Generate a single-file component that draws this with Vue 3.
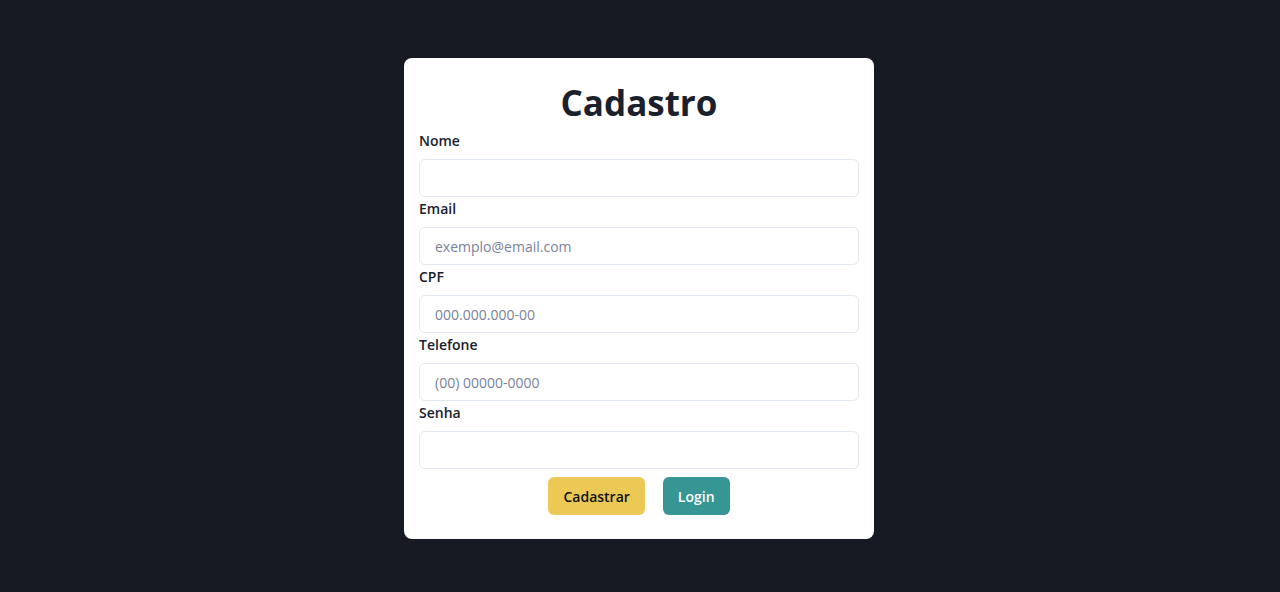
<script setup>
import { reactive } from 'vue'

const fields = [
  { id: 'nome', label: 'Nome', type: 'text', placeholder: '' },
  { id: 'email', label: 'Email', type: 'email', placeholder: 'exemplo@email.com' },
  { id: 'cpf', label: 'CPF', type: 'text', placeholder: '000.000.000-00' },
  { id: 'telefone', label: 'Telefone', type: 'tel', placeholder: '(00) 00000-0000' },
  { id: 'senha', label: 'Senha', type: 'password', placeholder: '' }
]
const form = reactive({ nome: '', email: '', cpf: '', telefone: '', senha: '' })
</script>

<template>
  <main class="page">
    <form class="card" @submit.prevent>
      <h1 class="title">Cadastro</h1>
      <div v-for="f in fields" :key="f.id" class="field">
        <label class="label" :for="f.id">{{ f.label }}</label>
        <input :id="f.id" v-model="form[f.id]" class="input" :type="f.type" :placeholder="f.placeholder" />
      </div>
      <div class="actions">
        <button class="button primary" type="submit">Cadastrar</button>
        <button class="button login" type="button">Login</button>
      </div>
    </form>
  </main>
</template>

<style>
body {
  background: #171923;
}
</style>

<style scoped>
.page {
  box-sizing: border-box;
  min-height: 100vh;
  display: flex;
  justify-content: center;
  align-items: flex-start;
  padding: 58px 18px 48px 16px;
  background: #171923;
  color: #1a202c;
  font-family: "Segoe UI", "Open Sans", "Noto Sans", sans-serif;
}
.card {
  box-sizing: border-box;
  width: 100%;
  max-width: 470px;
  padding: 22px 15px 24px;
  background: #fff;
  border-radius: 8px;
}
.title {
  margin: 0 0 4px;
  font-size: 35px;
  line-height: 45px;
  font-weight: 700;
  text-align: center;
}
.field {
  display: flex;
  flex-direction: column;
}
.label {
  margin-bottom: 6px;
  font-size: 14px;
  line-height: 24px;
  font-weight: 600;
}
.input {
  box-sizing: border-box;
  width: 100%;
  height: 38px;
  padding: 0 15px;
  border: 1px solid #e2e8f0;
  border-radius: 6px;
  background: #fff;
  color: inherit;
  font: inherit;
  font-size: 14px;
}
.input::placeholder {
  color: #7a8299;
  opacity: 1;
}
.actions {
  display: flex;
  justify-content: center;
  gap: 18px;
  margin-top: 8px;
}
.button {
  height: 38px;
  padding: 0 15px;
  border: 0;
  border-radius: 6px;
  font: inherit;
  font-size: 14px;
  font-weight: 600;
}
.primary {
  background: #ecc955;
  color: #101010;
}
.login {
  background: #369693;
  color: #fff;
}
</style>
